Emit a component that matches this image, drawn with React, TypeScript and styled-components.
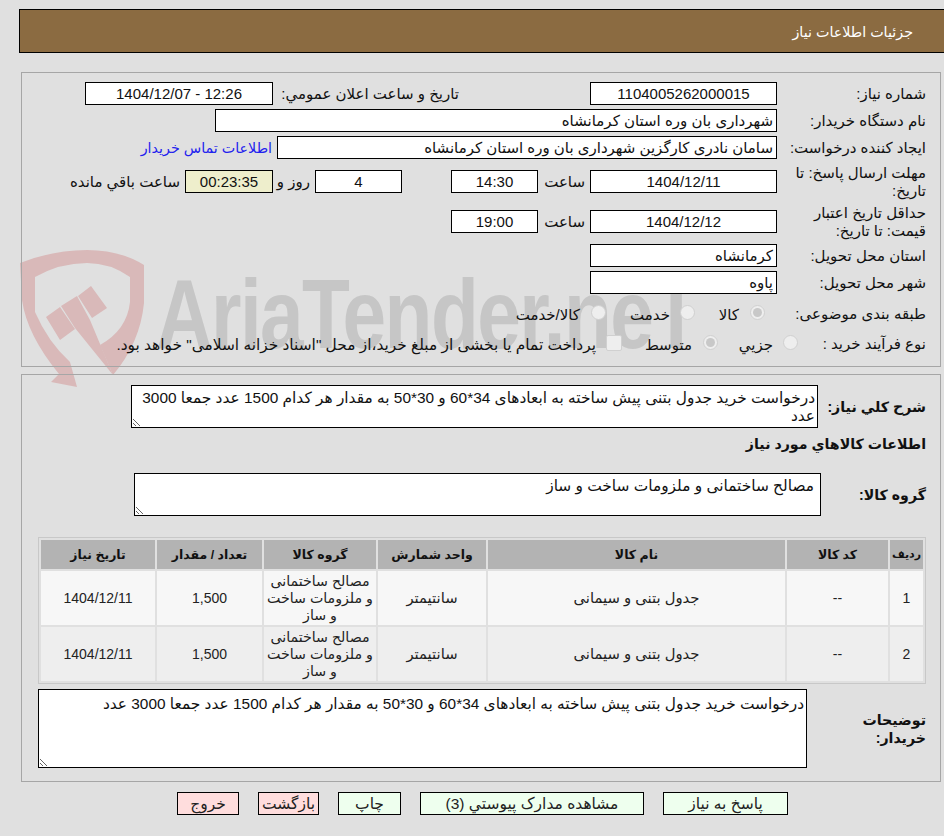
import React from 'react';
import styled, { createGlobalStyle } from 'styled-components';

const GlobalStyle = createGlobalStyle`
  html, body {
    margin: 0;
    padding: 0;
    background: #e0e0e0;
  }
  body {
    font-family: "Liberation Sans", "DejaVu Sans", sans-serif;
    font-size: 15px;
    color: #111;
  }
`;

const Page = styled.div`
  position: relative;
  direction: rtl;
  width: 944px;
  height: 836px;
  overflow: hidden;
  padding-top: 9px;
  box-sizing: border-box;
`;

const Watermark = styled.div`
  position: absolute;
  left: 15px;
  top: 245px;
  width: 626px;
  height: 145px;
  direction: ltr;
`;

const WatermarkText = styled.span`
  position: absolute;
  left: 141px;
  top: 14px;
  font-family: "Liberation Sans", sans-serif;
  font-size: 98px;
  font-weight: 700;
  line-height: 110px;
  letter-spacing: -2px;
  color: #c6c6c6;
  transform: scaleX(0.8);
  transform-origin: left center;
  white-space: nowrap;
`;

const ShieldIcon = styled.svg`
  position: absolute;
  left: 0;
  top: 0;
`;

const Content = styled.div`
  position: relative;
`;

const Header = styled.div`
  margin-left: 19px;
  height: 44px;
  box-sizing: border-box;
  border: 1px solid #000;
  border-right: 0;
  background: #8b6b41;
  color: #fff;
  font-size: 14.3px;
  line-height: 44px;
  padding-right: 31px;
`;

const Panel = styled.section<{ $height: number; $top: number }>`
  margin: ${p => p.$top}px 3px 0 21px;
  height: ${p => p.$height}px;
  box-sizing: border-box;
  border: 1px solid #a6a6a6;
  padding-right: 14px;
`;

const Row = styled.div<{ $top: number; $height?: number }>`
  display: flex;
  align-items: center;
  margin-top: ${p => p.$top}px;
  height: ${p => p.$height ?? 23}px;
`;

const Label = styled.div<{ $width?: number }>`
  flex: none;
  width: ${p => p.$width ?? 149}px;
  padding-left: 8px;
  box-sizing: border-box;
  line-height: 18px;
`;

const BoldLabel = styled(Label)`
  font-size: 14.2px;
  font-weight: 700;
`;

const Field = styled.div<{ $width: number; $start?: boolean; $tint?: boolean }>`
  flex: none;
  width: ${p => p.$width}px;
  height: 23px;
  box-sizing: border-box;
  border: 1px solid #000;
  background: ${p => (p.$tint ? '#eeeecc' : '#fff')};
  line-height: 21px;
  text-align: ${p => (p.$start ? 'right' : 'center')};
  padding: 0 3px;
  white-space: nowrap;
  overflow: hidden;
`;

const Text = styled.span<{ $gap?: number; $width?: number }>`
  flex: none;
  margin-right: ${p => p.$gap ?? 5}px;
  ${p => (p.$width ? `width: ${p.$width}px;` : '')}
  white-space: nowrap;
`;

const Option = styled(Text)`
  box-sizing: border-box;
  padding-top: 3px;
`;

const Notice = styled(Option)`
  font-size: 15.4px;
`;

const ContactLink = styled.a`
  flex: none;
  margin-right: 5px;
  color: #2222ee;
  font-size: 14.3px;
  text-decoration: none;
  white-space: nowrap;
`;

const Spacer = styled.span<{ $width: number }>`
  flex: none;
  width: ${p => p.$width}px;
`;

const Radio = styled.span<{ $checked?: boolean; $gap?: number }>`
  flex: none;
  position: relative;
  width: 15px;
  height: 15px;
  box-sizing: border-box;
  margin-right: ${p => p.$gap ?? 0}px;
  border-radius: 50%;
  border: 1px solid #d0d0d0;
  background: #eeeeee;
  transform: translateY(-1px);
  &::after {
    content: '';
    display: ${p => (p.$checked ? 'block' : 'none')};
    position: absolute;
    inset: 2px;
    border-radius: 50%;
    background: #c8c8c8;
  }
`;

const Checkbox = styled.span`
  flex: none;
  width: 16px;
  height: 16px;
  box-sizing: border-box;
  border-radius: 2px;
  border: 1px solid #d0d0d0;
  background: #eeeeee;
  transform: translateY(-1px);
`;

const Area = styled.textarea<{ $width: number; $height: number; $padTop?: number; $padRight?: number }>`
  flex: none;
  display: block;
  width: ${p => p.$width}px;
  height: ${p => p.$height}px;
  box-sizing: border-box;
  margin: 0;
  border: 1px solid #000;
  border-radius: 0;
  outline: none;
  background: #fff;
  color: #111;
  font-family: inherit;
  font-size: 15.4px;
  line-height: 18px;
  padding: ${p => p.$padTop ?? 3}px ${p => p.$padRight ?? 2}px 0 2px;
  overflow: hidden;
  resize: both;
`;

const SectionTitle = styled.div`
  margin-top: 7px;
  height: 18px;
  line-height: 18px;
  font-weight: 700;
  font-size: 14.2px;
`;

const ItemsTable = styled.table`
  table-layout: fixed;
  width: 888px;
  margin-top: 21px;
  border: 1px solid #c8c8c8;
  border-collapse: separate;
  border-spacing: 2px;
  text-align: center;
  color: #222;
`;

const HeadCell = styled.th<{ $tight?: boolean }>`
  height: 29px;
  padding: 0;
  background: #b3b3b3;
  color: #111;
  font-size: ${p => (p.$tight ? 11 : 12.5)}px;
  font-weight: 700;
  white-space: nowrap;
`;

const Cell = styled.td<{ $alt?: boolean; $num?: boolean }>`
  height: 54px;
  padding: 0;
  background: ${p => (p.$alt ? '#eeeeee' : '#f7f7f7')};
  line-height: 17px;
  font-size: ${p => (p.$num ? 14 : 14.8)}px;
`;

const GroupCell = styled(Cell)`
  font-size: 14.2px;
  white-space: nowrap;
`;

const Actions = styled.div`
  display: flex;
  margin: 10px 156px 0 0;
  gap: 19px;
`;

const Button = styled.button<{ $width: number; $danger?: boolean }>`
  flex: none;
  width: ${p => p.$width}px;
  height: 23px;
  box-sizing: border-box;
  padding: 0;
  border: 1px solid #000;
  border-radius: 0;
  background: ${p => (p.$danger ? '#ffdddd' : '#eeffee')};
  color: #222;
  font-family: inherit;
  font-size: 15.5px;
  white-space: nowrap;
`;

const widths = [33, 101, 297, 108, 112, 105, 114];
const heads = ['رديف', 'كد كالا', 'نام كالا', 'واحد شمارش', 'گروه كالا', 'تعداد / مقدار', 'تاريخ نياز'];
const group = 'مصالح ساختمانی و ملزومات ساخت و ساز';
const summary = 'درخواست خرید جدول بتنی پیش ساخته به ابعادهای 34*60 و 30*50 به مقدار هر کدام 1500 عدد جمعا 3000 عدد';

const Shield = () => (
  <ShieldIcon width="140" height="145" viewBox="0 0 140 145">
    <path
      fill="#d9b9b9"
      d="M5 18 Q38 5 72 5 Q105 5 129 20 V58 Q125 98 98 130 L85 100 Q112 85 115 57 V32 Q95 18 72 18 Q45 18 20 32 V67 Q33 97 55 117 L62 142 L36 137 L44 129 Q12 90 7 55 Z"
    />
    <path fill="#d9b9b9" d="M31 72 L45 62 L60 84 L45 95 Z M63 51 L76 41 L92 63 L77 73 Z M46 61 L62 51 L75 75 L98 130 L60 83 Z" />
  </ShieldIcon>
);

const App = () => (
  <Page>
    <GlobalStyle />
    <Watermark>
      <Shield />
      <WatermarkText>AriaTender.neT</WatermarkText>
    </Watermark>
    <Content>
      <Header>جزئيات اطلاعات نياز</Header>

      <Panel $top={19} $height={295}>
        <Row $top={9}>
          <Label>شماره نياز:</Label>
          <Field $width={187}>1104005262000015</Field>
          <Spacer $width={131} />
          <Text $gap={0} $width={186}>تاريخ و ساعت اعلان عمومي:</Text>
          <Field $width={188}>12:26 - 1404/12/07</Field>
        </Row>
        <Row $top={4}>
          <Label>نام دستگاه خريدار:</Label>
          <Field $width={562} $start>شهرداری بان وره استان کرمانشاه</Field>
        </Row>
        <Row $top={4}>
          <Label>ايجاد كننده درخواست:</Label>
          <Field $width={500} $start>سامان نادری کارگزین شهرداری بان وره استان کرمانشاه</Field>
          <ContactLink href="#">اطلاعات تماس خريدار</ContactLink>
        </Row>
        <Row $top={11}>
          <Label>مهلت ارسال پاسخ: تا تاريخ:</Label>
          <Field $width={187}>1404/12/11</Field>
          <Text $width={47}>ساعت</Text>
          <Field $width={87}>14:30</Field>
          <Spacer $width={49} />
          <Field $width={87}>4</Field>
          <Text $width={37}>روز و</Text>
          <Field $width={88} $tint>00:23:35</Field>
          <Text>ساعت باقي مانده</Text>
        </Row>
        <Row $top={17}>
          <Label>حداقل تاريخ اعتبار قيمت: تا تاريخ:</Label>
          <Field $width={187}>1404/12/12</Field>
          <Text $width={47}>ساعت</Text>
          <Field $width={87}>19:00</Field>
        </Row>
        <Row $top={11}>
          <Label>استان محل تحويل:</Label>
          <Field $width={187} $start>کرمانشاه</Field>
        </Row>
        <Row $top={4}>
          <Label>شهر محل تحويل:</Label>
          <Field $width={187} $start>پاوه</Field>
        </Row>
        <Row $top={8}>
          <Label>طبقه بندی موضوعی:</Label>
          <Radio $checked $gap={12} />
          <Option $gap={11} $width={44}>کالا</Option>
          <Radio />
          <Option $gap={10} $width={64}>خدمت</Option>
          <Radio />
          <Option $gap={11}>کالا/خدمت</Option>
        </Row>
        <Row $top={7}>
          <Label $width={128}>نوع فرآيند خريد :</Label>
          <Radio />
          <Option $gap={10} $width={55}>جزيي</Option>
          <Radio $checked />
          <Option $gap={11} $width={70}>متوسط</Option>
          <Checkbox />
          <Notice $gap={10}>پرداخت تمام يا بخشی از مبلغ خريد،از محل "اسناد خزانه اسلامی" خواهد بود.</Notice>
        </Row>
      </Panel>

      <Panel $top={7} $height={408}>
        <Row $top={10} $height={43}>
          <BoldLabel $width={108}>شرح كلي نياز:</BoldLabel>
          <Area $width={687} $height={43} readOnly value={summary} />
        </Row>
        <SectionTitle>اطلاعات كالاهاي مورد نياز</SectionTitle>
        <Row $top={20} $height={43}>
          <BoldLabel $width={105}>گروه كالا:</BoldLabel>
          <Area $width={687} $height={43} $padRight={6} readOnly value={group} />
        </Row>
        <ItemsTable>
          <colgroup>
            {widths.map(w => <col key={w} width={w} />)}
          </colgroup>
          <thead>
            <tr>{heads.map((h, i) => <HeadCell key={h} $tight={i === 0}>{h}</HeadCell>)}</tr>
          </thead>
          <tbody>
            {[1, 2].map(n => (
              <tr key={n}>
                <Cell $alt={n === 2} $num>{n}</Cell>
                <Cell $alt={n === 2} $num>--</Cell>
                <Cell $alt={n === 2}>جدول بتنی و سیمانی</Cell>
                <Cell $alt={n === 2}>سانتیمتر</Cell>
                <GroupCell $alt={n === 2}>مصالح ساختمانی<br />و ملزومات ساخت<br />و ساز</GroupCell>
                <Cell $alt={n === 2} $num>1,500</Cell>
                <Cell $alt={n === 2} $num>1404/12/11</Cell>
              </tr>
            ))}
          </tbody>
        </ItemsTable>
        <Row $top={5} $height={79}>
          <BoldLabel $width={119}>توضيحات خريدار:</BoldLabel>
          <Area $width={769} $height={79} $padTop={5} readOnly value={summary} />
        </Row>
      </Panel>

      <Actions>
        <Button $width={125}>پاسخ به نياز</Button>
        <Button $width={224}>مشاهده مدارک پيوستي (3)</Button>
        <Button $width={63}>چاپ</Button>
        <Button $width={61} $danger>بازگشت</Button>
        <Button $width={62} $danger>خروج</Button>
      </Actions>
    </Content>
  </Page>
);

export default App;
